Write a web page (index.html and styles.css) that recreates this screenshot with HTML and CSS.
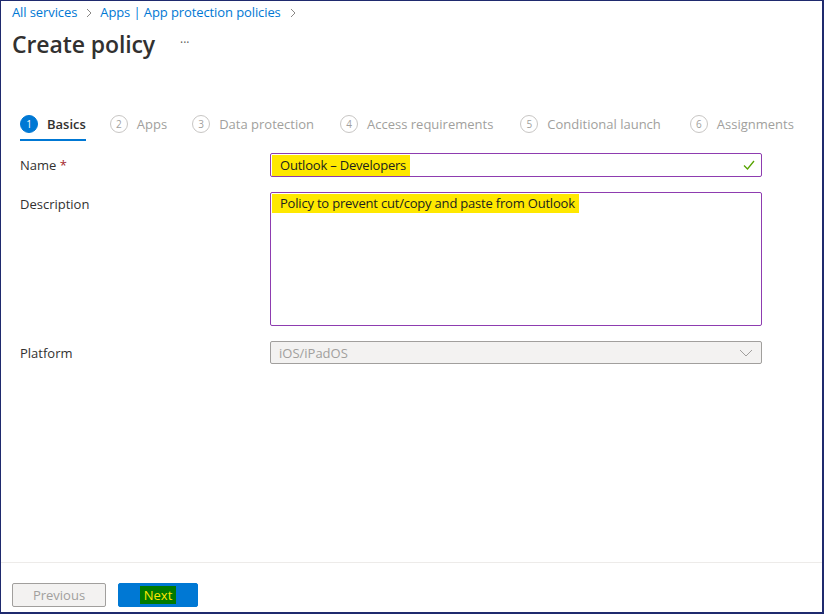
FILE: index.html
```html
<!DOCTYPE html>
<html lang="en">
<head>
<meta charset="utf-8">
<title>Create policy</title>
<link rel="stylesheet" href="styles.css">
</head>
<body>
<div class="frame">
  <div class="main">
    <nav class="crumbs">
      <a class="crumb">All services</a>
      <svg class="chev" width="8" height="10" viewBox="0 0 8 10"><path d="M2 1l4 4-4 4" fill="none" stroke="#8a8886" stroke-width="1"/></svg>
      <a class="crumb">Apps | App protection policies</a>
      <svg class="chev" width="8" height="10" viewBox="0 0 8 10"><path d="M2 1l4 4-4 4" fill="none" stroke="#8a8886" stroke-width="1"/></svg>
    </nav>
    <div class="title-row">
      <h1 class="title">Create policy</h1>
      <span class="more">···</span>
    </div>

    <div class="tabs">
      <div class="tab active"><span class="num">1</span><span class="lbl">Basics</span></div>
      <div class="tab"><span class="num">2</span><span class="lbl">Apps</span></div>
      <div class="tab"><span class="num">3</span><span class="lbl">Data protection</span></div>
      <div class="tab"><span class="num">4</span><span class="lbl">Access requirements</span></div>
      <div class="tab"><span class="num">5</span><span class="lbl">Conditional launch</span></div>
      <div class="tab"><span class="num">6</span><span class="lbl">Assignments</span></div>
    </div>

    <div class="form">
      <label class="flabel">Name <span class="req">*</span></label>
      <div class="field input">
        <span class="hl">Outlook – Developers</span>
        <svg class="check" width="12" height="10" viewBox="0 0 12 10"><path d="M1 5.5l3.5 3.5L11 1" fill="none" stroke="#57a300" stroke-width="1.3"/></svg>
      </div>

      <label class="flabel">Description</label>
      <div class="field textarea">
        <span class="hl hl-desc">Policy to prevent cut/copy and paste from Outlook</span>
      </div>

      <label class="flabel">Platform</label>
      <div class="field select">
        <span>iOS/iPadOS</span>
        <svg class="down" width="14" height="8" viewBox="0 0 14 8"><path d="M1 1l6 6 6-6" fill="none" stroke="#a19f9d" stroke-width="1"/></svg>
      </div>
    </div>
  </div>

  <div class="footer">
    <button class="btn prev">Previous</button>
    <button class="btn next"><span class="next-hl">Next</span></button>
  </div>
</div>
</body>
</html>
```

FILE: styles.css
```css
* { box-sizing: border-box; }
html, body { margin: 0; padding: 0; background: #fff; }
body {
  font-family: "Open Sans", "Noto Sans", sans-serif;
  font-size: 13px;
  color: #323130;
}
.frame {
  width: 824px;
  height: 614px;
  border-style: solid;
  border-color: #1f2a6e;
  border-width: 1px 2px 2px 1px;
  display: flex;
  flex-direction: column;
}
.main { flex: 1; }
.crumbs {
  display: flex;
  align-items: center;
  padding: 2px 0 0 11px;
  height: 20px;
}
.crumb {
  color: #0078d4;
  font-size: 13px;
  letter-spacing: -0.1px;
}
.chev { margin: 1px 7px 0 8px; }
.title-row {
  display: flex;
  align-items: center;
  padding-left: 11px;
  height: 46px;
}
.title {
  margin: 0;
  font-size: 23px;
  font-weight: 600;
  color: #323130;
  letter-spacing: -0.1px;
}
.more {
  margin-left: 25px;
  color: #605e5c;
  font-size: 12px;
  margin-top: -4px;
}
.tabs {
  display: flex;
  padding-left: 19px;
  margin-top: 48px;
  height: 26px;
}
.tab {
  display: flex;
  align-items: flex-start;
  margin-right: 24px;
  color: #a19f9d;
  font-size: 13px;
  height: 26px;
}
.tab:nth-child(2) { margin-right: 25px; }
.tab:nth-child(3) { margin-right: 26px; }
.tab:nth-child(4) { margin-right: 27px; }
.tab:nth-child(5) { margin-right: 29px; }
.tab .num {
  width: 18px;
  height: 18px;
  border-radius: 50%;
  border: 1px solid #c8c6c4;
  display: flex;
  align-items: center;
  justify-content: center;
  font-size: 10px;
  color: #a19f9d;
  margin-right: 9px;
  line-height: 1;
}
.tab .lbl { line-height: 18px; }
.tab.active {
  border-bottom: 2px solid #0078d4;
  color: #323130;
  font-weight: 600;
}
.tab.active .num {
  background: #0078d4;
  border-color: #0078d4;
  color: #fff;
  font-weight: 400;
}
.form {
  display: grid;
  grid-template-columns: 250px 492px;
  row-gap: 15px;
  padding-left: 19px;
  margin-top: 12px;
}
.flabel {
  font-size: 13px;
  padding-top: 3px;
  color: #323130;
}
.req { color: #a4262c; }
.field {
  border: 1px solid #8e3cb0;
  border-radius: 2px;
  display: flex;
  position: relative;
}
.input {
  height: 24px;
  align-items: center;
  padding: 0 1px;
}
.hl {
  background: #ffe800;
  color: #201f1e;
  padding: 0 4px 0 8px;
  line-height: 21px;
  font-size: 13px;
  letter-spacing: -0.2px;
  white-space: nowrap;
}
.check { position: absolute; right: 6px; top: 6px; }
.textarea {
  height: 134px;
  align-items: flex-start;
  padding: 1px;
}
.hl-desc { line-height: 19px; }
.select {
  height: 23px;
  background: #f3f2f1;
  border-color: #a19f9d;
  align-items: center;
  padding-left: 8px;
  color: #a19f9d;
  font-size: 13px;
}
.down { position: absolute; right: 8px; top: 7px; }
.footer {
  border-top: 1px solid #edebe9;
  height: 50px;
  display: flex;
  align-items: flex-start;
  padding: 20px 0 0 11px;
  gap: 12px;
}
.btn {
  font-family: inherit;
  font-size: 13px;
  height: 24px;
  border-radius: 2px;
  padding: 0;
  cursor: default;
}
.prev {
  width: 94px;
  background: #f3f2f1;
  border: 1px solid #a19f9d;
  color: #a19f9d;
}
.next {
  width: 80px;
  background: #0078d4;
  border: 1px solid #0078d4;
  display: flex;
  align-items: center;
  justify-content: center;
}
.next-hl {
  background: #007a00;
  color: #ffe800;
  padding: 0 4px;
  line-height: 18px;
}
```
